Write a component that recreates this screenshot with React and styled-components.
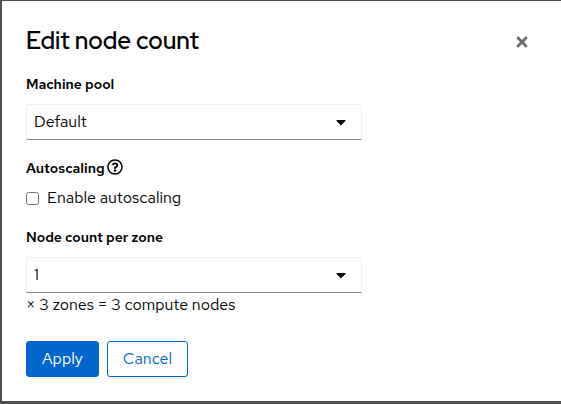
import React, { useState } from "react";
import styled, { createGlobalStyle } from "styled-components";
import { FaCaretDown, FaRegQuestionCircle, FaTimes } from "react-icons/fa";

const GlobalStyle = createGlobalStyle`
  *, *::before, *::after { box-sizing: border-box; }
  body {
    margin: 0;
    background: #505052;
    color: #030303;
    font-family: "Red Hat Text", Lato, sans-serif;
    font-size: 16px;
    line-height: 24px;
  }
  button, select, input { font: inherit; color: inherit; }
`;

const Backdrop = styled.div`
  display: flex;
  flex-direction: column;
  min-height: 100vh;
  padding: 1px 0 3px 2px;
`;

const Dialog = styled.section`
  flex: 1;
  padding: 24px;
  background: #fff;
`;

const Header = styled.header`
  display: flex;
  align-items: center;
  justify-content: space-between;
  height: 32px;
  margin-bottom: 15px;
`;

const Title = styled.h1`
  margin: 0;
  font-family: "Red Hat Display", "Red Hat Text", Lato, sans-serif;
  font-size: 24px;
  font-weight: 600;
  line-height: 32px;
`;

const CloseButton = styled.button`
  display: flex;
  padding: 9px 7px 7px;
  border: 0;
  background: none;
  color: #6a6e73;
  cursor: pointer;
`;

const Form = styled.form`
  display: flex;
  flex-direction: column;
  gap: 16px;
`;

const Field = styled.div`
  display: flex;
  flex-direction: column;
`;

const LabelRow = styled.div`
  display: flex;
  align-items: center;
  gap: 2px;
  height: 24px;
  margin-bottom: ${({ $tight }) => ($tight ? "6px" : "8px")};
  font-size: 14px;
  font-weight: 600;
`;

const HelpButton = styled.button`
  display: flex;
  padding: 0 0 2px;
  border: 0;
  background: none;
  cursor: pointer;
`;

const SelectBox = styled.div`
  display: grid;
  align-items: center;
  width: 100%;
  max-width: 336px;

  > * { grid-area: 1 / 1; }
  > svg {
    justify-self: end;
    margin-right: 13px;
    pointer-events: none;
  }
`;

const Select = styled.select`
  width: 100%;
  height: 36px;
  padding: 0 32px 0 7px;
  border: 1px solid #f0f0f0;
  border-bottom-color: #8a8d90;
  border-radius: 0;
  background: #fff;
  appearance: none;
`;

const CheckLabel = styled.label`
  display: flex;
  align-items: center;
  gap: 8px;
  height: 23px;
`;

const Checkbox = styled.input`
  width: 13px;
  height: 13px;
  margin: 2px 0 0;
`;

const Helper = styled.p`
  margin: 0;
`;

const Actions = styled.footer`
  display: flex;
  gap: 8px;
  padding-top: 8px;
`;

const Button = styled.button`
  height: 36px;
  padding: 0 15px;
  border: 1px solid #06c;
  border-radius: 3px;
  background: ${({ $primary }) => ($primary ? "#06c" : "#fff")};
  color: ${({ $primary }) => ($primary ? "#fff" : "#06c")};
  cursor: pointer;
`;

function SelectField({ id, label, options, children }) {
  return (
    <Field>
      <LabelRow>
        <label htmlFor={id}>{label}</label>
      </LabelRow>
      <SelectBox>
        <Select id={id}>
          {options.map((option) => (
            <option key={option}>{option}</option>
          ))}
        </Select>
        <FaCaretDown size={16} aria-hidden="true" />
      </SelectBox>
      {children}
    </Field>
  );
}

export default function App() {
  const [autoscaling, setAutoscaling] = useState(false);

  return (
    <>
      <GlobalStyle />
      <Backdrop>
        <Dialog role="dialog" aria-labelledby="dialog-title">
          <Header>
            <Title id="dialog-title">Edit node count</Title>
            <CloseButton type="button" aria-label="Close">
              <FaTimes size={16} />
            </CloseButton>
          </Header>
          <Form onSubmit={(event) => event.preventDefault()}>
            <SelectField id="machine-pool" label="Machine pool" options={["Default"]} />
            <Field role="group" aria-labelledby="autoscaling-label">
              <LabelRow $tight>
                <span id="autoscaling-label">Autoscaling</span>
                <HelpButton type="button" aria-label="About autoscaling">
                  <FaRegQuestionCircle size={16} />
                </HelpButton>
              </LabelRow>
              <CheckLabel>
                <Checkbox
                  type="checkbox"
                  checked={autoscaling}
                  onChange={(event) => setAutoscaling(event.target.checked)}
                />
                Enable autoscaling
              </CheckLabel>
            </Field>
            <SelectField id="node-count" label="Node count per zone" options={["1"]}>
              <Helper>× 3 zones = 3 compute nodes</Helper>
            </SelectField>
            <Actions>
              <Button type="submit" $primary>Apply</Button>
              <Button type="button">Cancel</Button>
            </Actions>
          </Form>
        </Dialog>
      </Backdrop>
    </>
  );
}
